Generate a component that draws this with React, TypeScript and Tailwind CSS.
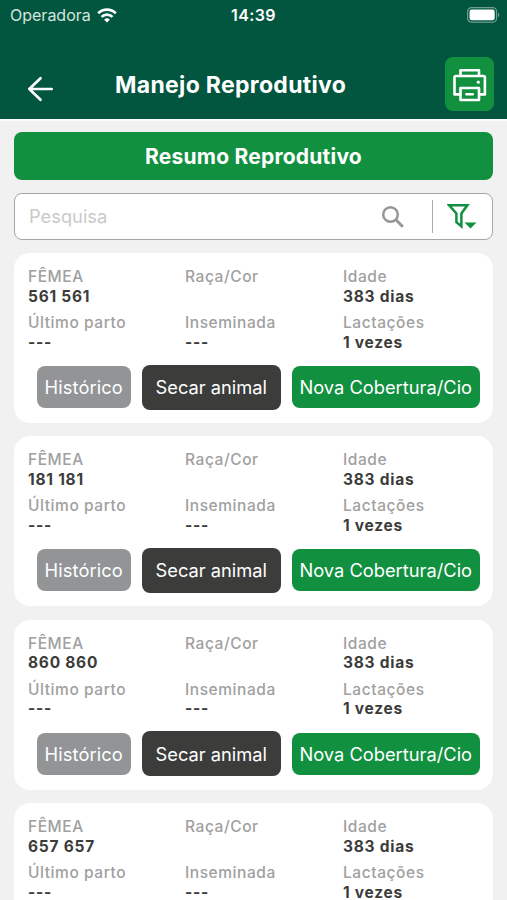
type Animal = {
  id: string;
  breed?: string;
  age: string;
  lastBirth: string;
  inseminated: string;
  lactations: string;
};

const animals: Animal[] = ['561 561', '181 181', '860 860', '657 657'].map((id) => ({
  id,
  age: '383 dias',
  lastBirth: '---',
  inseminated: '---',
  lactations: '1 vezes',
}));

function StatusBar() {
  return (
    <div className="flex h-[30px] items-center justify-between pr-[7px] pl-[10px]">
      <div className="flex w-[160px] items-center gap-[6.5px]">
        <span className="text-[16px] text-[#d3e5dd]">Operadora</span>
        <svg width="20" height="15" viewBox="0 0 20 15" fill="none" stroke="#fff" strokeWidth="2.7">
          <path d="M1.2 5.3a12.6 12.6 0 0 1 17.6 0" />
          <path d="M4.5 8.9a7.9 7.9 0 0 1 11 0" />
          <path d="M10 14.6 7.1 11.7a4.2 4.2 0 0 1 5.8 0z" fill="#fff" stroke="none" />
        </svg>
      </div>
      <span className="mr-[3px] text-[16px] font-semibold tracking-[0.4px] text-white">14:39</span>
      <div className="flex w-[160px] justify-end">
        <svg width="33" height="16" viewBox="0 0 33 16" fill="none">
          <rect x="0.6" y="0.6" width="29" height="14.6" rx="4" stroke="#6f9f8d" strokeWidth="1.2" />
          <rect x="2.5" y="2.5" width="25.2" height="10.8" rx="2.2" fill="#fff" />
          <path d="M31 5.5c1.8.8 1.8 4 0 4.8z" fill="#6f9f8d" />
        </svg>
      </div>
    </div>
  );
}

function Header() {
  return (
    <header className="h-[119px] shrink-0 bg-[#02563f]">
      <StatusBar />
      <div className="flex items-center pt-[27px] pr-[13px] pl-[27px]">
        <button className="mt-[9px] w-[88px]">
          <svg width="27" height="26" viewBox="0 0 27 26" fill="none" stroke="#fff" strokeWidth="2.7" strokeLinecap="round" strokeLinejoin="round">
            <path d="M24.7 13H2.3M13.5 2.3 2.3 13l11.2 10.7" />
          </svg>
        </button>
        <h1 className="mt-[2px] text-[23px] font-bold tracking-[0.32px] whitespace-nowrap text-white">
          Manejo Reprodutivo
        </h1>
        <button className="ml-auto flex h-[54px] w-[49px] items-center justify-center rounded-lg bg-[#11903f] pt-[2px]">
          <svg width="34" height="34" viewBox="0 0 34 34" fill="none" stroke="#fff" strokeWidth="2.6" strokeLinejoin="round">
            <path d="M7.5 8V2.3H26V8" />
            <path d="M7.5 26.4h-6V9.5Q1.5 8 3 8h27.4q1.5 0 1.5 1.5v16.9H26" />
            <path d="M7.5 20H26v12H7.5z" />
            <path d="M13.5 26.3h6.2" strokeLinecap="round" />
            <circle cx="25.3" cy="14.2" r="1.6" fill="#fff" stroke="none" />
          </svg>
        </button>
      </div>
    </header>
  );
}

function SearchBar() {
  return (
    <div className="mt-[13px] flex h-[47px] items-center rounded-lg border-[1.5px] border-[#a6a6a6] bg-white pl-[14px]">
      <span className="flex-1 text-[18.3px] text-[#cacaca]">Pesquisa</span>
      <svg className="mr-[27px]" width="24" height="24" viewBox="0 0 24 24" fill="none" stroke="#979797" strokeWidth="2.5">
        <circle cx="9.5" cy="9.5" r="7.3" />
        <path d="m14.8 14.8 7 7" strokeWidth="3" />
      </svg>
      <div className="h-[33px] w-[1.5px] bg-[#ababab]" />
      <svg className="mr-[15px] ml-[14px]" width="30" height="27" viewBox="0 0 30 27">
        <path d="M2.2 2.3h18.2l-6 8.2v12.8l-5-4.1v-8.7z" fill="none" stroke="#11903f" strokeWidth="2.5" />
        <path d="M17.5 19.5h12l-6 6z" fill="#11903f" />
      </svg>
    </div>
  );
}

function Field({ label, value }: { label: string; value?: string }) {
  return (
    <div className="h-[46px] text-[15.5px] leading-[19.5px]">
      <div className="font-medium tracking-[0.57px] text-[#a0a0a0]">{label}</div>
      <div className="font-bold tracking-[0.75px] text-[#3c3c3b]">{value}</div>
    </div>
  );
}

function AnimalCard({ animal }: { animal: Animal }) {
  return (
    <div className="h-[170px] shrink-0 rounded-2xl bg-white pt-[14px] pr-[13px] pl-[14px]">
      <div className="grid grid-cols-[157px_158px_1fr]">
        <Field label="FÊMEA" value={animal.id} />
        <Field label="Raça/Cor" value={animal.breed} />
        <Field label="Idade" value={animal.age} />
        <Field label="Último parto" value={animal.lastBirth} />
        <Field label="Inseminada" value={animal.inseminated} />
        <Field label="Lactações" value={animal.lactations} />
      </div>
      <div className="mt-[5.5px] flex items-center justify-end text-[18.3px] whitespace-nowrap text-white">
        <button className="h-[42px] w-[94.5px] rounded-lg bg-[#929496] pt-px tracking-[0.1px]">Histórico</button>
        <button className="ml-[10.5px] h-[45px] w-[139.5px] rounded-lg bg-[#3c3c3b] pt-px">Secar animal</button>
        <button className="ml-[10.5px] h-[42px] w-[188.5px] rounded-lg bg-[#11903f] pt-px">Nova Cobertura/Cio</button>
      </div>
    </div>
  );
}

export default function App() {
  return (
    <div className="flex h-[900px] w-[507px] flex-col overflow-hidden bg-[#f1f1f1] font-['Inter','Liberation_Sans',sans-serif]">
      <Header />
      <div className="h-[2px] shrink-0 bg-[#fbfbfb]" />
      <main className="px-[14px] pt-[11px]">
        <button className="block h-[48px] w-full rounded-lg bg-[#11903f] pt-[2px] text-[21px] font-bold tracking-[0.22px] text-white">
          Resumo Reprodutivo
        </button>
        <SearchBar />
        <div className="mt-[13px] flex flex-col gap-[13.4px]">
          {animals.map((animal) => (
            <AnimalCard key={animal.id} animal={animal} />
          ))}
        </div>
      </main>
    </div>
  );
}
